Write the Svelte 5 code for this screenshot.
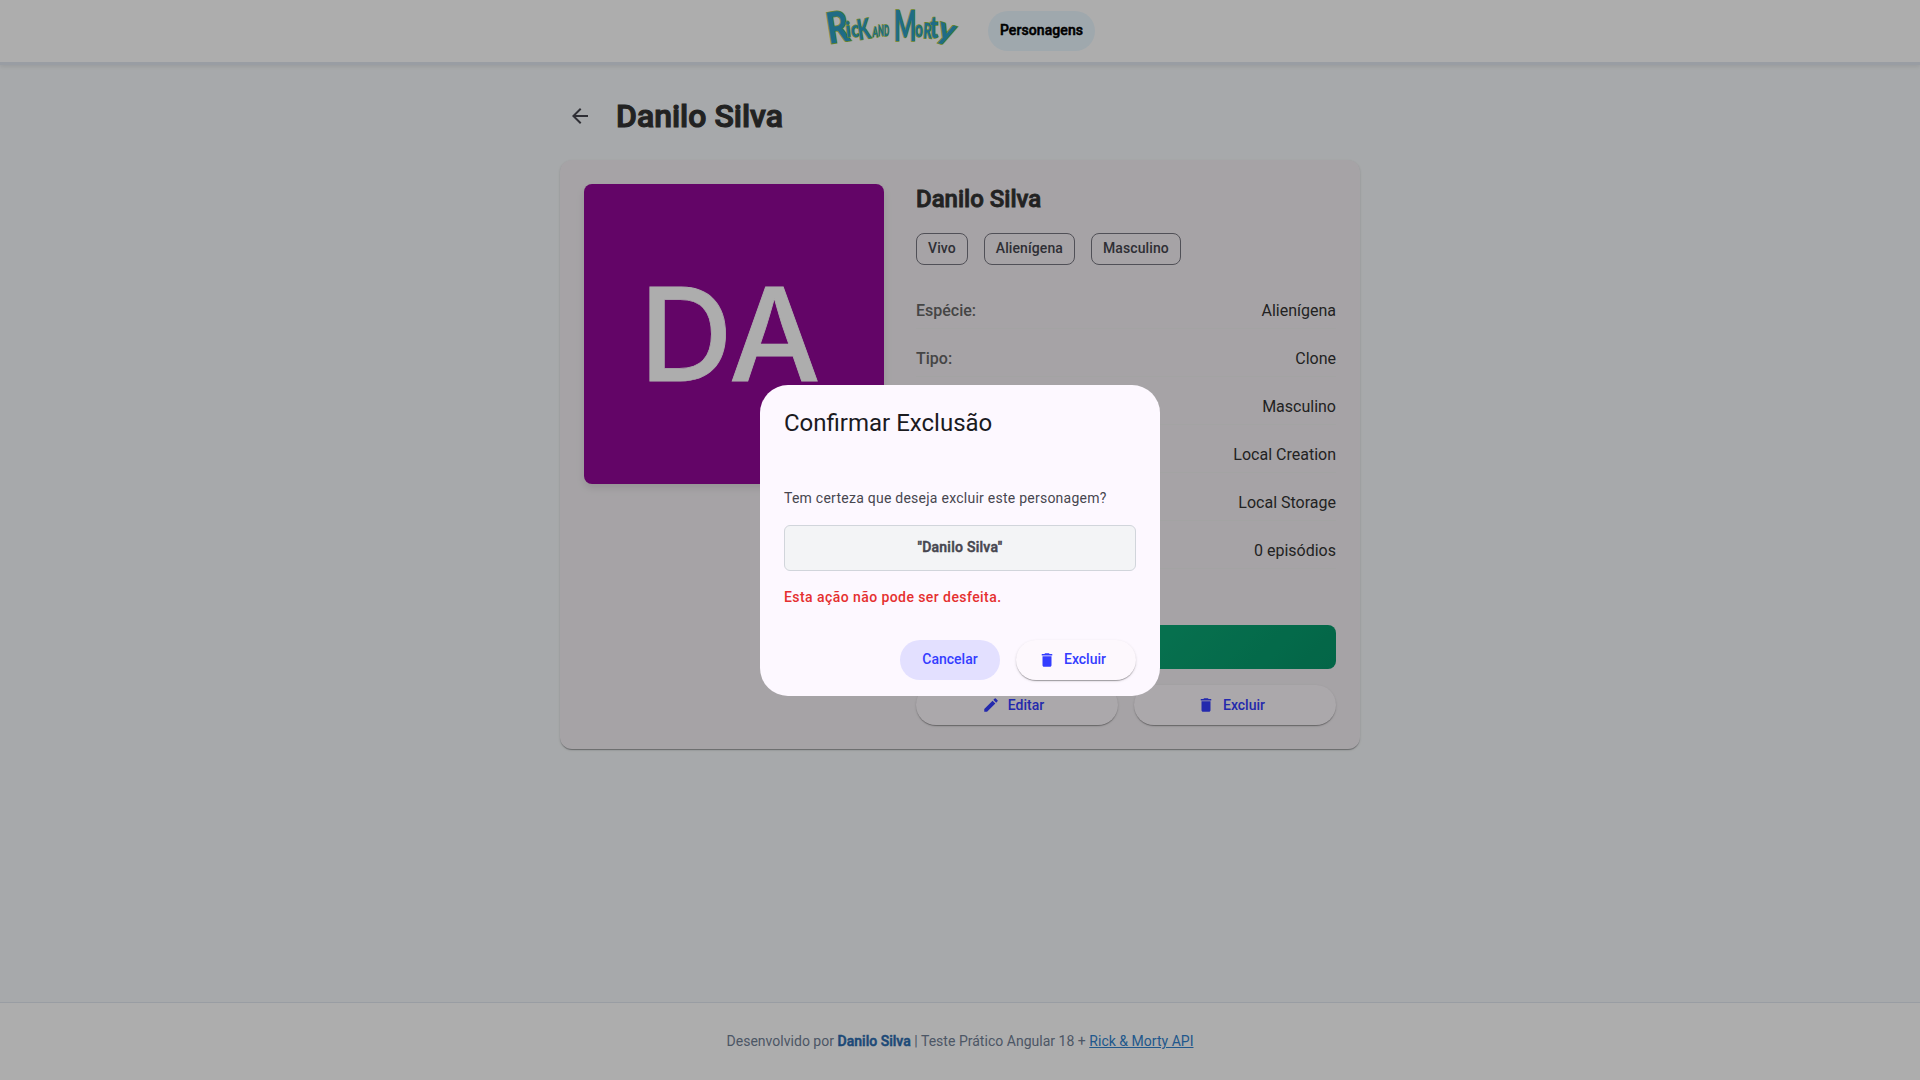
<script>
  const chips = ['Vivo', 'Alienígena', 'Masculino'];
  const rows = [
    ['Espécie:', 'Alienígena'],
    ['Tipo:', 'Clone'],
    ['', 'Masculino'],
    ['', 'Local Creation'],
    ['', 'Local Storage'],
    ['', '0 episódios']
  ];
  // letter, x, baseline, font size, horizontal scale, rotation
  const letters = [
    ['R', 4, 38, 43, 0.8, -9],
    ['i', 21.5, 31, 21, 0.9, -6],
    ['c', 26.5, 31, 22, 0.75, -3],
    ['K', 34, 34, 28, 0.65, -9],
    ['A', 47.5, 31, 14, 0.55, 0],
    ['N', 53, 30, 15, 0.5, 0],
    ['D', 59, 30, 15, 0.45, 0],
    ['M', 69, 35, 42, 0.56, 0],
    ['o', 90, 31, 22, 0.62, 0],
    ['R', 98, 32, 21, 0.62, 3],
    ['t', 105, 32, 30, 0.72, 0],
    ['y', 111, 31, 31, 1.05, 17]
  ];
</script>

{#snippet trash()}
  <svg class="glyph" viewBox="0 0 24 24"><path d="M6 19c0 1.1.9 2 2 2h8c1.100 0 2-.9 2-2V7H6v12zM19 4h-3.500l-1-1h-5l-1 1H5v2h14V4z" /></svg>
{/snippet}

<div class="page">
  <header>
    <svg class="logo" viewBox="0 0 131 44" role="img" aria-label="Rick and Morty">
      {#each letters as [ch, x, y, size, sx, rot]}
        <text font-size={size} transform="translate({x} {y}) rotate({rot}) scale({sx} 1)">{ch}</text>
      {/each}
    </svg>
    <nav>Personagens</nav>
  </header>

  <main>
    <div class="heading">
      <span class="back"><svg viewBox="0 0 24 24"><path d="M20 11H7.830l5.590-5.590L12 4l-8 8 8 8 1.410-1.410L7.830 13H20v-2z" /></svg></span>
      <h1>Danilo Silva</h1>
    </div>
    <section class="card">
      <div class="avatar"><span>DA</span></div>
      <div class="details">
        <h2>Danilo Silva</h2>
        <div class="chips">{#each chips as c}<span>{c}</span>{/each}</div>
        <dl>
          {#each rows as [label, value]}
            <div><dt>{label}</dt><dd>{value}</dd></div>
          {/each}
        </dl>
        <div class="green"></div>
        <div class="actions">
          <button class="raised"><svg class="glyph" viewBox="0 0 24 24"><path d="M3 17.250V21h3.750L17.810 9.940l-3.750-3.750L3 17.250zM20.710 7.040a1 1 0 0 0 0-1.410l-2.340-2.340a1 1 0 0 0-1.410 0l-1.830 1.830 3.750 3.750 1.830-1.830z" /></svg>Editar</button>
          <button class="raised">{@render trash()}Excluir</button>
        </div>
      </div>
    </section>
  </main>

  <footer>
    <p>Desenvolvido por <strong>Danilo Silva</strong> | Teste Prático Angular 18 + <a href="#api">Rick &amp; Morty API</a></p>
  </footer>
</div>

<div class="backdrop">
  <div class="dialog" role="dialog">
    <h3>Confirmar Exclusão</h3>
    <p class="question">Tem certeza que deseja excluir este personagem?</p>
    <div class="name">"Danilo Silva"</div>
    <p class="warning">Esta ação não pode ser desfeita.</p>
    <div class="dialog-actions">
      <button class="cancel">Cancelar</button>
      <button class="raised">{@render trash()}Excluir</button>
    </div>
  </div>
</div>

<style>
  :global(body) { margin: 0; overflow: hidden; }
  .page, .backdrop { font-family: Roboto, sans-serif; box-sizing: border-box; }
  .page { height: 1080px; display: flex; flex-direction: column; background: #f7fafc; color: #333; }
  .page *, .backdrop * { box-sizing: border-box; }
  h1, h2, h3, p, dl, dd { margin: 0; }
  header { height: 65px; flex: none; background: #fff; border-bottom: 3px solid #e2e8f0; box-shadow: 0 2px 4px rgba(0, 0, 0, .08); display: flex; justify-content: center; gap: 32px; }
  .logo { width: 131px; height: 44px; margin-top: 6px; overflow: visible; }
  .logo text { font-family: Lato, sans-serif; font-weight: 900; fill: #2fa0c4; stroke: #9cc436; stroke-width: 1.5px; paint-order: stroke; }
  nav { width: 107px; height: 40px; margin-top: 11px; border-radius: 20px; background: #ebf8ff; color: #000; font-size: 14px; letter-spacing: .08px; line-height: 39px; text-align: center; }
  main { width: 800px; margin: 0 auto; flex: 1; }
  .heading { height: 95px; padding-top: 7px; display: flex; align-items: center; gap: 16px; }
  .back { width: 40px; height: 40px; display: grid; place-items: center; }
  .back svg { width: 24px; height: 24px; fill: #46464f; }
  h1, h2, nav, .name, footer strong { font-weight: 500; -webkit-text-stroke: .035em currentColor; }
  h1 { font-size: 32px; line-height: 40px; }
  .card { height: 589px; border-radius: 12px; padding: 24px; background: #f5f1f5; display: flex; gap: 32px; box-shadow: 0 2px 1px -1px rgba(0,0,0,.2), 0 1px 1px rgba(0,0,0,.14), 0 1px 3px rgba(0,0,0,.12); }
  .avatar { width: 300px; height: 300px; padding: 1px 7px 0 0; border-radius: 8px; background: #930898; color: #fff; font: 500 129px/1 Inter, sans-serif; letter-spacing: 1px; display: flex; align-items: center; justify-content: center; box-shadow: 0 4px 8px rgba(0,0,0,.1); }
  .avatar span { -webkit-text-stroke: .8px currentColor; }
  .details { flex: 1; }
  h2 { font-size: 24px; line-height: 30px; margin-bottom: 19px; }
  .chips { display: flex; gap: 16px; }
  .chips span { height: 32px; padding: 0 11px; border: 1px solid #777680; border-radius: 8px; font-size: 14px; font-weight: 500; letter-spacing: .1px; line-height: 29px; color: #46464f; }
  dl { margin-top: 16px; }
  dl div { height: 48px; padding-top: 18px; border-bottom: 1px solid #f0f0f0; display: flex; justify-content: space-between; font-size: 16px; line-height: 24px; }
  dt { color: #666; font-weight: 500; }
  .green { height: 44px; margin-top: 56px; border-radius: 8px; background: linear-gradient(135deg, #10b981, #059669); }
  .actions { margin-top: 16px; display: grid; grid-template-columns: 1fr 1fr; gap: 16px; }
  button { height: 40px; border: 0; border-radius: 20px; font: 500 14px/38px Roboto, sans-serif; color: #343dff; padding: 0; display: flex; align-items: center; justify-content: center; }
  .raised { background: #fdf8fd; gap: 8px; padding-right: 8px; box-shadow: 0 2px 1px -1px rgba(0,0,0,.2), 0 1px 1px rgba(0,0,0,.14), 0 1px 3px rgba(0,0,0,.12); }
  .glyph { width: 18px; height: 18px; fill: #343dff; }
  footer { height: 78px; flex: none; border-top: 1px solid #e2e8f0; background: #fff; text-align: center; font-size: 14px; letter-spacing: .02px; line-height: 20px; padding-top: 28px; color: #718096; }
  footer strong { color: #2b6cb0; }
  footer a { color: #3182ce; font-weight: 400; }
  .backdrop { position: fixed; inset: 0; background: rgba(0,0,0,.32); display: grid; place-items: center; }
  .dialog { width: 400px; height: 311px; padding: 0 24px 16px; border-radius: 28px; background: #fdf8ff; display: flex; flex-direction: column; }
  h3 { margin-top: 22px; font-size: 24px; line-height: 32px; font-weight: 400; color: #1b1b1f; }
  .question { margin-top: 49px; font-size: 14px; line-height: 20px; letter-spacing: .25px; color: #47464f; }
  .name { height: 46px; margin-top: 17px; border: 1px solid #d1d5db; border-radius: 6px; background: #f3f4f6; text-align: center; font-size: 14px; letter-spacing: .25px; line-height: 43px; color: #47464f; }
  .warning { margin-top: 16px; font-size: 14px; line-height: 20px; font-weight: 500; letter-spacing: .43px; color: #e53030; }
  .dialog-actions { margin-top: auto; display: flex; justify-content: flex-end; gap: 16px; }
  .dialog-actions button { line-height: 36px; padding-bottom: 2px; }
  .dialog-actions .glyph { margin-top: 2px; }
  .cancel { width: 100px; background: #e3e0ff; }
  .dialog-actions .raised { width: 120px; }
</style>
